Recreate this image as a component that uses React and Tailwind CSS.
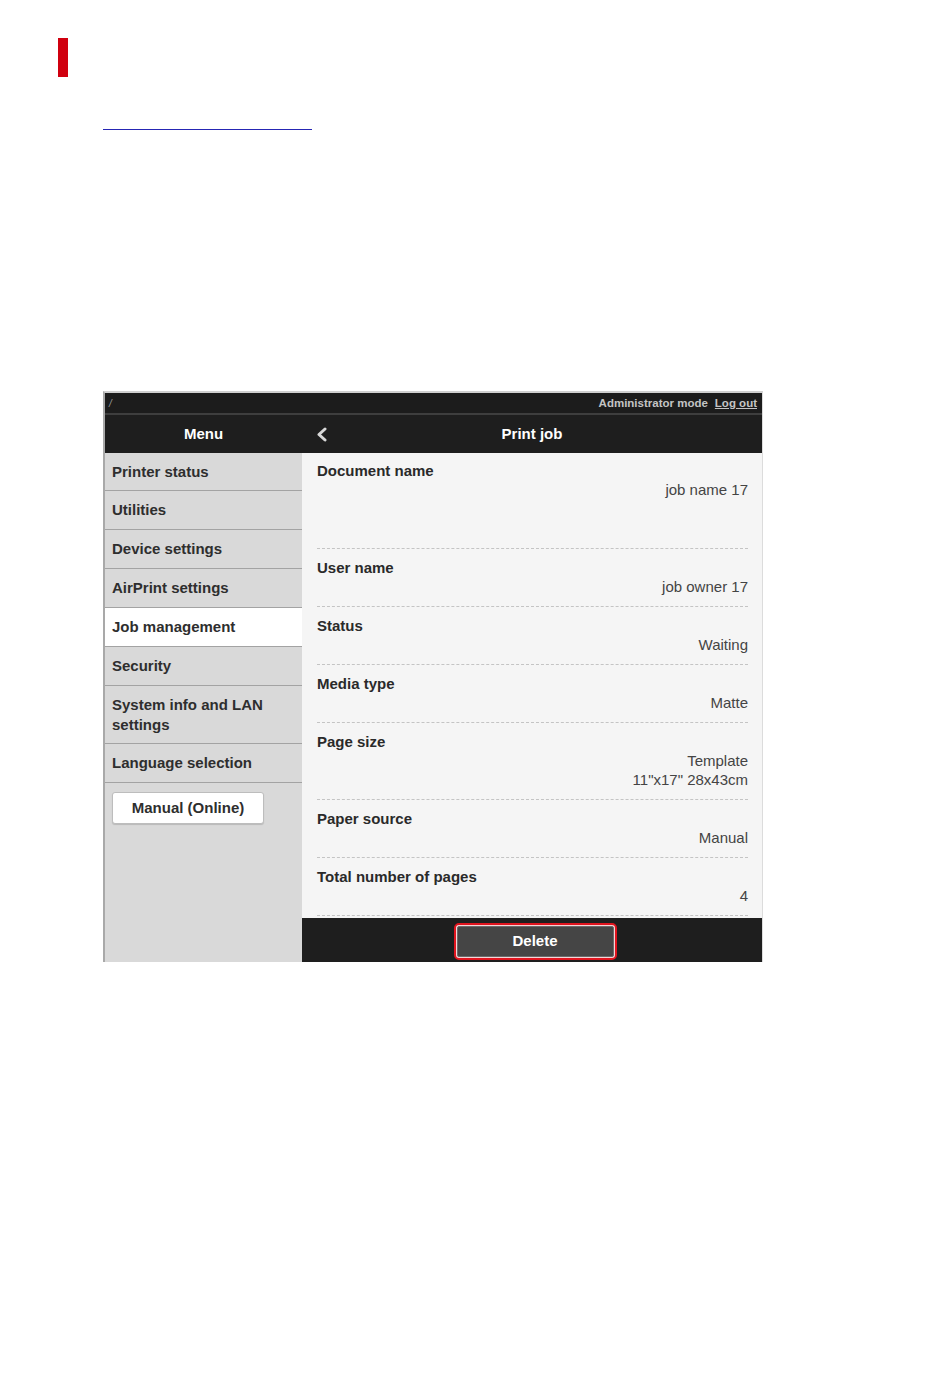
import React from "react";

const menu = [
  { t: "Printer status", h: "h-[38px]" },
  { t: "Utilities", h: "h-[39px]" },
  { t: "Device settings", h: "h-[39px]" },
  { t: "AirPrint settings", h: "h-[39px]" },
  { t: "Job management", h: "h-[39px]", active: true },
  { t: "Security", h: "h-[39px]" },
  { t: "System info and LAN settings", h: "h-[58px]", two: true },
  { t: "Language selection", h: "h-[39px]" },
];

const rows = [
  { l: "Document name", v: ["job name 17"], first: true },
  { l: "User name", v: ["job owner 17"] },
  { l: "Status", v: ["Waiting"] },
  { l: "Media type", v: ["Matte"] },
  { l: "Page size", v: ["Template", "11\"x17\" 28x43cm"] },
  { l: "Paper source", v: ["Manual"] },
  { l: "Total number of pages", v: ["4"] },
];

export default function App() {
  return (
    <div
      className="w-[950px] h-[1397px] bg-white overflow-hidden"
      style={{ fontFamily: '"Liberation Sans", Arial, sans-serif' }}
    >
      <div className="pt-[38px] pl-[58px]">
        <div className="w-[10px] h-[39px] bg-[#d0000f]" />
      </div>
      <div className="mt-[52px] ml-[103px] w-[209px] h-px bg-[#2626b4]" />

      <div className="mt-[261px] ml-[103px] w-[660px] border-t-2 border-l-2 border-t-[#cfcfcf] border-l-[#a9a9a9] border-r border-r-[#dcdcdc]">
        {/* top bar */}
        <div className="h-[20px] bg-[#1c1c1c] flex items-center justify-between pl-[4px] pr-[5px] pt-[2px]">
          <span className="text-[10px] text-[#9a9a9a] italic leading-none">/</span>
          <div className="flex items-center gap-[7px] text-[11.5px] font-bold text-[#c4c4c4] leading-none">
            <span>Administrator mode</span>
            <span className="underline">Log out</span>
          </div>
        </div>
        <div className="h-[2px] bg-[#3e3e3e]" />
        {/* header */}
        <div className="h-[38px] bg-[#1e1e1e] flex text-white font-bold text-[15px]">
          <div className="w-[197px] flex items-center justify-center">Menu</div>
          <div className="flex-1 relative flex items-center justify-center">
            <svg
              className="absolute left-[14px] top-[12px]"
              width="12"
              height="15"
              viewBox="0 0 12 15"
            >
              <polyline
                points="9,2 3,7.5 9,13"
                fill="none"
                stroke="#d8d8d8"
                strokeWidth="3"
                strokeLinecap="round"
                strokeLinejoin="round"
              />
            </svg>
            <span>Print job</span>
          </div>
        </div>
        {/* body */}
        <div className="flex h-[509px]">
          <div className="w-[197px] bg-[#d9d9d9] flex flex-col">
            {menu.map((m) => (
              <div
                key={m.t}
                className={`${m.h} border-b border-[#a3a3a3] flex items-center pl-[7px] pr-[20px] text-[15px] font-bold text-[#2e2e2e] leading-[20px] ${
                  m.active ? "bg-white" : ""
                }`}
              >
                {m.t}
              </div>
            ))}
            <div className="pl-[7px] pt-[9px]">
              <div className="w-[152px] h-[32px] bg-white border border-[#bdbdbd] rounded-[3px] shadow-[0_1px_1px_rgba(0,0,0,0.15)] flex items-center justify-center text-[15px] font-bold text-[#2e2e2e]">
                Manual (Online)
              </div>
            </div>
          </div>
          <div className="flex-1 flex flex-col">
            <div className="flex-1 bg-[#f5f5f5] px-[15px] pr-[14px]">
              {rows.map((r) => (
                <div
                  key={r.l}
                  className={`border-b border-dashed border-[#c4c4c4] ${
                    r.first ? "h-[96px] pt-[8px]" : "pt-[9px] pb-[10px]"
                  }`}
                >
                  <div className="text-[15px] font-bold text-[#2a2a2a] leading-[19px]">{r.l}</div>
                  {r.v.map((v) => (
                    <div
                      key={v}
                      className="text-[15px] text-[#444444] leading-[19px] text-right"
                    >
                      {v}
                    </div>
                  ))}
                </div>
              ))}
            </div>
            <div className="h-[44px] bg-[#1e1e1e] flex items-center justify-center pt-[2px]">
              <div className="ml-[6px] rounded-[5px] border-2 border-[#e0141e] p-[1px] bg-[#f3d6d8]">
                <div className="w-[157px] h-[31px] bg-[#454545] border border-[#6a6a6a] rounded-[2px] flex items-center justify-center text-white font-bold text-[15px]">
                  Delete
                </div>
              </div>
            </div>
          </div>
        </div>
      </div>
    </div>
  );
}
